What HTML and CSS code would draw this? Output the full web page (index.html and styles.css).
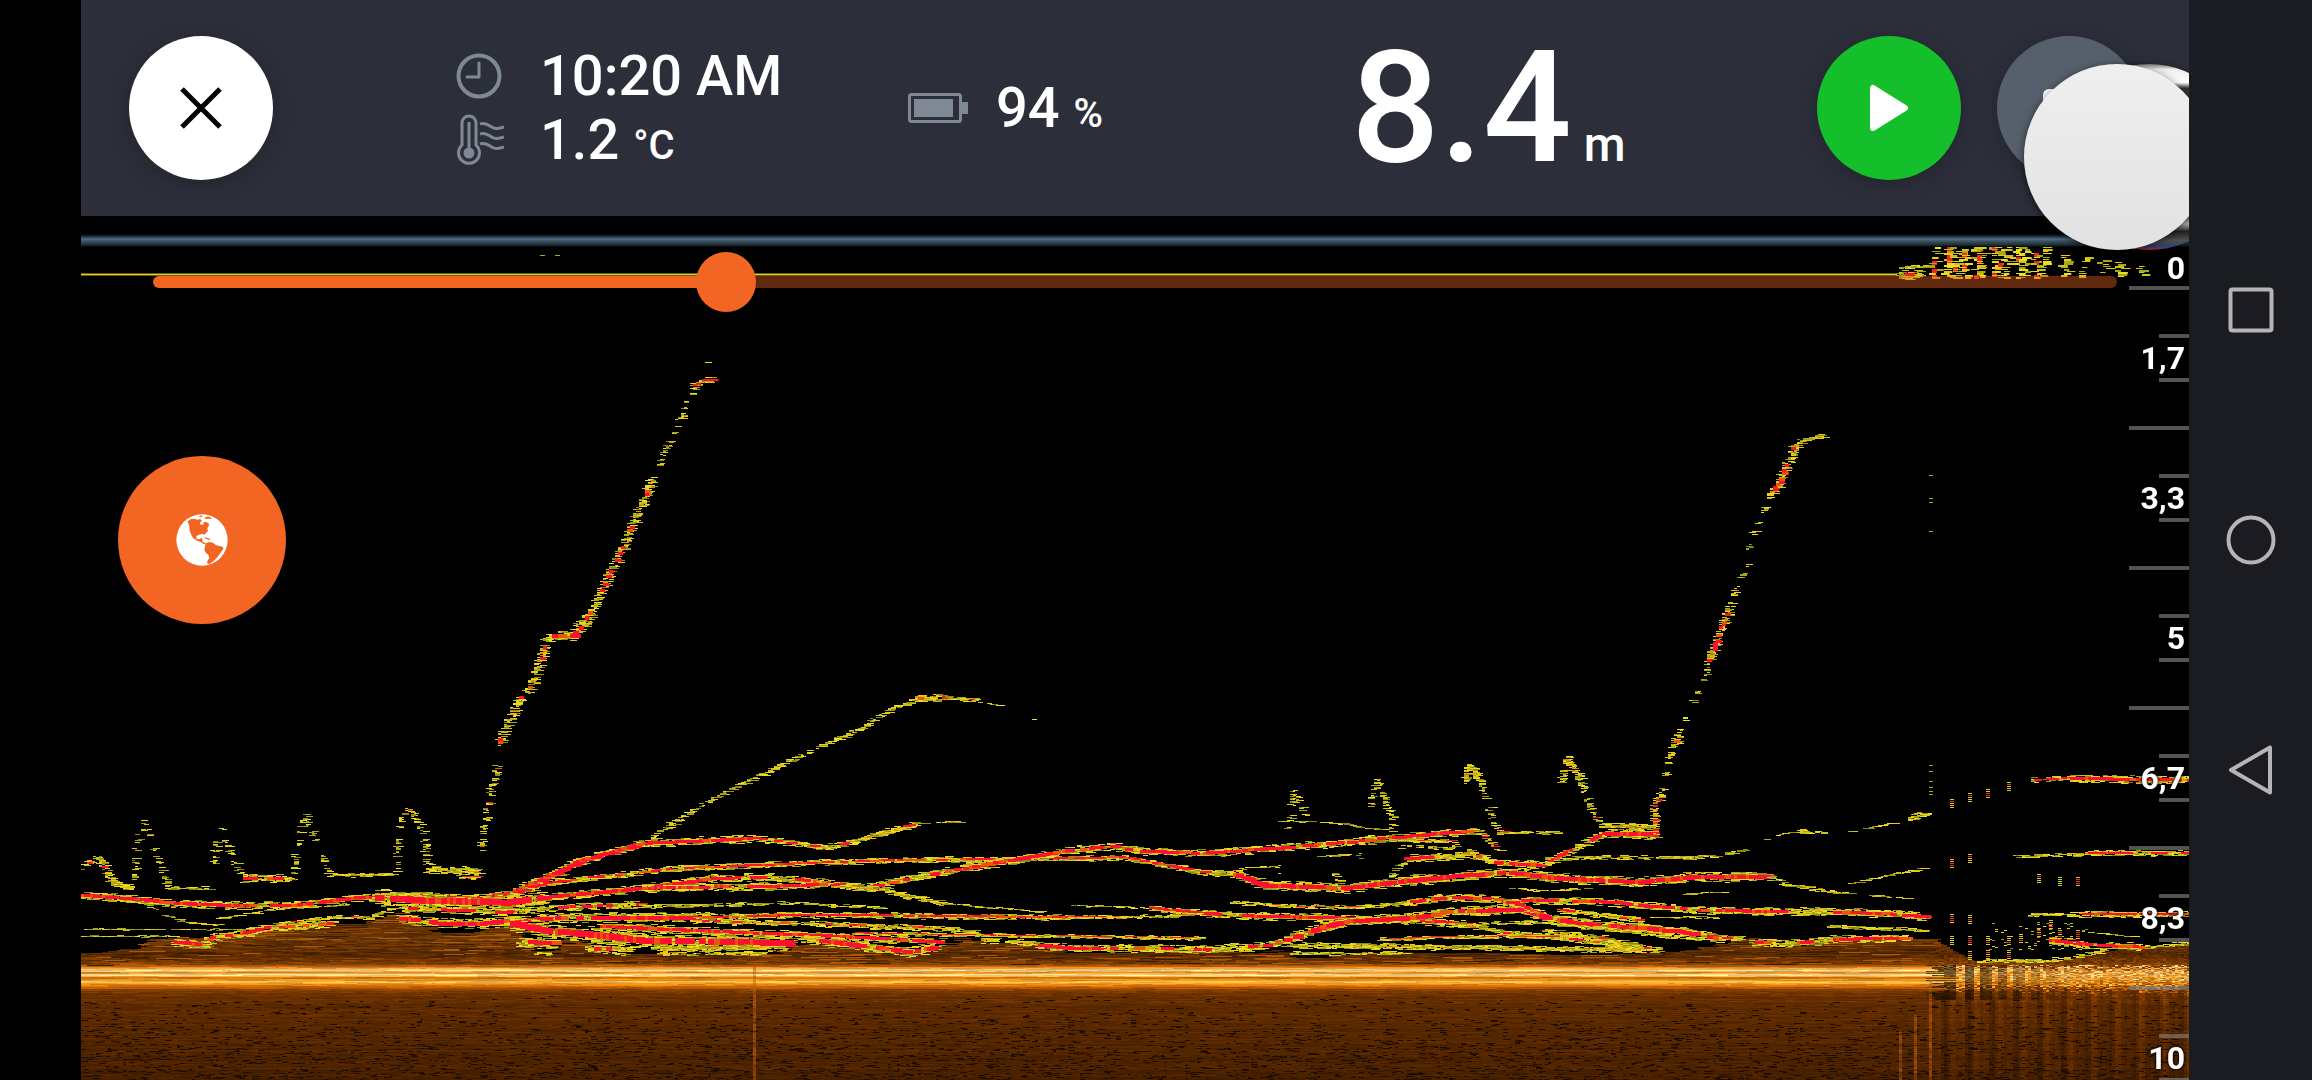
FILE: index.html
```html
<!DOCTYPE html>
<html lang="en">
<head>
    <meta charset="UTF-8">
    <meta name="viewport" content="width=device-width, initial-scale=1.0">
    <title>Sonar History</title>
    <link rel="stylesheet" href="styles.css">
</head>
<body>
    <main class="app">
        <header class="topbar">
            <div>
                <button class="round close" type="button" aria-label="Close">
                    <svg width="44" height="44" viewBox="0 0 44 44"><path d="M3 3L41 41M41 3L3 41" stroke="#000" stroke-width="5"/></svg>
                </button>
            </div>
            <div class="readouts">
                <div class="readout">
                    <svg class="icon" width="48" height="50" viewBox="0 0 48 50" fill="none" stroke="#7f8995" stroke-width="4">
                        <circle cx="23" cy="25" r="20.5"/>
                        <path d="M23 12v14H11" stroke-width="3" stroke-linecap="round" stroke-linejoin="round"/>
                    </svg>
                    <span>10:20 AM</span>
                </div>
                <div class="readout">
                    <svg class="icon" width="48" height="52" viewBox="0 0 48 52" fill="none" stroke="#7f8995" stroke-width="3">
                        <path d="M6 31V9a7 7 0 0 1 14 0v22a10.500 10.500 0 1 1-14 0z"/>
                        <path d="M13 8v30"/>
                        <circle cx="13" cy="39" r="5.500" fill="#7f8995" stroke="none"/>
                        <path d="M24 10c9-4 10 9 24 3M24 20c9-4 10 9 24 3M24 30c9-4 10 9 24 3"/>
                    </svg>
                    <span>1.2 <small>°C</small></span>
                </div>
            </div>
            <div class="readout battery">
                <svg class="icon" width="60" height="30" viewBox="0 0 60 30">
                    <rect x="1.500" y="1.500" width="51" height="27" rx="2" fill="none" stroke="#7f8995" stroke-width="3"/>
                    <rect x="6" y="6" width="39" height="18" fill="#7f8995"/>
                    <rect x="54" y="9" width="6" height="12" fill="#7f8995"/>
                </svg>
                <span>94 <small>%</small></span>
            </div>
            <div class="depth">8.4<small>m</small></div>
            <div class="actions">
                <button class="round play" type="button" aria-label="Play">
                    <svg width="40" height="48" viewBox="0 0 40 48"><path d="M4 4v40L36 24z" fill="#fff" stroke="#fff" stroke-width="6" stroke-linejoin="round"/></svg>
                </button>
                <button class="round more" type="button" aria-label="Take a snapshot">
                    <svg width="52" height="38" viewBox="0 0 52 38"><rect width="52" height="38" rx="6" fill="#fff"/></svg>
                </button>
            </div>
        </header>

        <section class="sonar">
            <canvas id="echo" width="2108" height="864"></canvas>
            <input class="seek" type="range" min="0" max="1000" value="285" aria-label="Playback position">
            <ol class="scale">
                <li class="surface">0</li>
                <li>1,7</li>
                <li>3,3</li>
                <li>5</li>
                <li>6,7</li>
                <li>8,3</li>
                <li>10</li>
            </ol>
        </section>

        <button class="map" type="button" aria-label="Map">
            <svg width="52" height="52" viewBox="288 282 156 156">
                <circle cx="366" cy="360" r="77" fill="#fff"/>
                <g fill="#f26522">
                    <path d="M322 305L331 298L343 296L352 299L361 297L366 303L359 308L362 314L370 314L371 306L379 306L387 311L386 318L382 325L384 333L378 339L373 344L368 342L356 344L349 349L350 357L358 358L363 354L368 356L366 363L373 368L378 370L372 373L363 367L352 362L340 355L334 345L329 332L328 318L325 310Z"/>
                    <path d="M377 370L388 366L399 368L407 375L418 378L428 380L430 386L423 397L412 412L400 424L390 431L382 431L382 423L388 414L385 404L378 399L373 389Z"/>
                    <path d="M374 293L384 289L393 293L394 297L386 296L376 297ZM357 289L365 286L367 290L360 292ZM370 352L379 353L391 357L387 360L377 356Z"/>
                </g>
            </svg>
        </button>
        <div class="bubble photo"></div>
        <div class="bubble"></div>
    </main>

    <nav class="sysnav">
        <button type="button" aria-label="Recent apps">
            <svg width="50" height="50" viewBox="0 0 50 50"><rect x="4.500" y="4.500" width="41" height="41" rx="2"/></svg>
        </button>
        <button type="button" aria-label="Home">
            <svg width="50" height="50" viewBox="0 0 50 50"><circle cx="25" cy="25" r="22.500"/></svg>
        </button>
        <button type="button" aria-label="Back">
            <svg width="50" height="50" viewBox="0 0 50 50"><path d="M5 25L44 2.500V47.500Z" stroke-linejoin="round"/></svg>
        </button>
    </nav>

    <script src="echo.js"></script>
</body>
</html>
```
FILE: styles.css
```css
* {
    box-sizing: border-box;
}
body {
    margin: 0;
    padding-left: 81px;
    min-height: 100vh;
    display: flex;
    background-color: #000;
    color: #fff;
    font-family: Roboto, "Liberation Sans", sans-serif;
}
button {
    border: none;
    padding: 0;
    cursor: pointer;
    display: flex;
    align-items: center;
    justify-content: center;
}
.app {
    flex: 1;
    min-width: 0;
    display: flex;
    flex-direction: column;
    position: relative;
    overflow: hidden;
}

/* top bar */
.topbar {
    display: grid;
    grid-template-columns: 327fr 452fr 443fr 466fr auto;
    align-items: center;
    padding: 36px 48px;
    background-color: #2c2f3a;
}
.round {
    width: 144px;
    height: 144px;
    border-radius: 50%;
    box-shadow: 0 4px 20px rgba(0, 0, 0, 0.25);
}
.close {
    background-color: #fff;
}
.play {
    background-color: #15bf2c;
}
.more {
    background-color: #56606c;
}
.actions {
    display: flex;
    gap: 36px;
}
.readout {
    display: flex;
    align-items: center;
    gap: 36px;
    font-size: 56px;
    font-weight: 500;
    line-height: 64px;
    white-space: nowrap;
}
.readout small {
    font-size: 40px;
    line-height: 1;
}
.battery {
    gap: 28px;
}
.icon {
    flex: none;
}
.depth {
    font-size: 156px;
    font-weight: 500;
    line-height: 144px;
    white-space: nowrap;
}
.depth small {
    font-size: 48px;
    line-height: 1;
    margin-left: 12px;
}

/* echogram */
.sonar {
    flex: 1;
    position: relative;
    overflow: hidden;
}
#echo {
    display: block;
    width: 100%;
    height: 100%;
}
.seek {
    appearance: none;
    position: absolute;
    left: 72px;
    right: 72px;
    top: 36px;
    width: calc(100% - 144px);
    height: 60px;
    margin: 0;
    background: none;
}
.seek::-webkit-slider-runnable-track {
    height: 12px;
    border-radius: 6px;
    background: linear-gradient(to right, #f26522 29%, rgba(242, 101, 34, 0.4) 29%);
}
.seek::-webkit-slider-thumb {
    appearance: none;
    width: 60px;
    height: 60px;
    margin-top: -24px;
    border-radius: 50%;
    background-color: #f26522;
}
.scale {
    --tick: linear-gradient(rgba(128, 128, 128, 0.65), rgba(128, 128, 128, 0.65));
    position: absolute;
    top: 30px;
    right: 0;
    margin: 0;
    padding: 0;
    list-style: none;
    font-size: 32px;
    font-weight: 700;
    line-height: 44px;
    text-align: right;
    text-shadow: 0 0 3px #000, 0 0 3px #000;
}
.scale li {
    width: 60px;
    height: 140px;
    padding: 50px 4px 0 0;
    background: var(--tick) right 0 / 60px 4px no-repeat,
        var(--tick) right 48px / 30px 4px no-repeat,
        var(--tick) right 92px / 30px 4px no-repeat;
}
.scale .surface {
    height: 40px;
    padding-top: 0;
    background: none;
}

/* floating controls */
.map {
    position: absolute;
    left: 37px;
    top: 456px;
    width: 168px;
    height: 168px;
    border-radius: 50%;
    background-color: #f26522;
}
.bubble {
    position: absolute;
    top: 64px;
    right: -21px;
    width: 186px;
    height: 186px;
    border-radius: 50%;
    background: linear-gradient(#efefef, #e2e2e2);
    box-shadow: 0 2px 8px rgba(0, 0, 0, 0.6);
}
.photo {
    right: -53px;
    background: linear-gradient(#77736a 0, #eee 3%, #fff 10%, #333 13%, #555 80%, #bbb 86%, #222 90%, #54514a 95%, #2b3f80 98%, #b02828);
}

/* system navigation */
.sysnav {
    width: 123px;
    display: flex;
    flex-direction: column;
    align-items: center;
    justify-content: center;
    gap: 170px;
    background-color: #1b1c21;
}
.sysnav button {
    width: 60px;
    height: 60px;
    background: none;
}
.sysnav svg {
    fill: none;
    stroke: #b5b5b5;
    stroke-width: 4;
}
```
FILE: echo.js
```js
const canvas = document.getElementById('echo');
const ctx = canvas.getContext('2d');
const LEFT = 81, RIGHT = 2189, TOP = 216, BOTTOM = 1080;

// echoes are in screen coordinates
ctx.translate(-LEFT, -TOP);

// seeded random, so the echogram is the same on every load
let seed = 8402;
function rand() {
    seed = (seed + 0x6D2B79F5) | 0;
    let t = Math.imul(seed ^ (seed >>> 15), 1 | seed);
    t = (t + Math.imul(t ^ (t >>> 7), 61 | t)) ^ t;
    return ((t ^ (t >>> 14)) >>> 0) / 4294967296;
}

const yellows = ['#e8e020', '#c8c41c', '#a8a818', '#f0c818', '#8c8c14'];

function dash(x, y, w, color, h) {
    ctx.fillStyle = color;
    ctx.fillRect(Math.round(x / 3) * 3, Math.round(y), w, h || 1);
}

function heightAt(points, x) {
    for (let i = 1; i < points.length; i++) {
        const [x0, y0] = points[i - 1];
        const [x1, y1] = points[i];
        if (x <= x1) return y0 + (y1 - y0) * (x - x0) / (x1 - x0);
    }
    return points[points.length - 1][1];
}

// seabed colour by depth: y, r, g, b
const layers = [
    [900, 100, 48, 0], [940, 112, 56, 4], [955, 90, 42, 0], [963, 120, 58, 2],
    [966, 190, 98, 10], [968, 240, 160, 50], [970, 255, 225, 160], [972, 225, 135, 25],
    [975, 255, 225, 150], [977, 215, 115, 5], [980, 240, 155, 30], [982, 255, 195, 90],
    [984, 230, 130, 10], [987, 190, 92, 2], [990, 130, 62, 0], [995, 108, 50, 0],
    [1005, 95, 43, 0], [1040, 84, 38, 0], [1080, 72, 32, 0]
];

function layerColor(y) {
    for (let i = 1; i < layers.length; i++) {
        if (y <= layers[i][0]) {
            const a = layers[i - 1], b = layers[i];
            const f = (y - a[0]) / (b[0] - a[0]);
            return [1, 2, 3].map(k => a[k] + (b[k] - a[k]) * f);
        }
    }
    return layers[layers.length - 1].slice(1);
}

const seabed = [
    [81, 953], [105, 950], [134, 947], [141, 939], [171, 937], [209, 938], [241, 933], [280, 925],
    [355, 923], [396, 913], [419, 927], [437, 933], [473, 932], [509, 923], [523, 947], [544, 955],
    [562, 937], [580, 942], [591, 952], [626, 953], [765, 954], [783, 945], [819, 943], [890, 950],
    [911, 953], [954, 938], [983, 942], [1033, 943], [1061, 952], [1104, 953], [1158, 950], [1200, 950],
    [1254, 953], [1271, 948], [1293, 958], [1325, 957], [1343, 952], [1500, 953], [1593, 955],
    [1682, 950], [1718, 943], [1743, 935], [1773, 948], [1813, 940], [1933, 938], [1952, 950],
    [1977, 962], [2050, 962], [2087, 955], [2123, 948], [2189, 945]
];

function drawSeabed() {
    for (let y = 912; y < BOTTOM; y++) {
        const base = layerColor(y);
        const rowShade = 0.92 + rand() * 0.16;
        let x = LEFT;
        while (x < RIGHT) {
            const broken = x > 1925;
            const w = broken ? 3 : 3 + Math.floor(rand() * (y > 965 && y < 990 ? 14 : 7)) * 3;
            if (y >= heightAt(seabed, x)) {
                let shade = rowShade * (0.86 + rand() * 0.28);
                let c = base;
                if (y < 964) shade *= 0.75 + rand() * 0.45;
                if (broken && y > 964 && y < 1000) {
                    c = layerColor(y + (rand() - 0.5) * 12);
                    // pings lost while the sonar was moving
                    const fade = Math.min(1, Math.max(0, (x - 1950) / 130));
                    const column = Math.abs(Math.sin(x * 0.19)) > 0.8 ? 1 : 0.45 + 0.5 * fade;
                    shade *= x < 1946 ? 0.45 : column;
                }
                if (broken && y >= 990) shade *= 1 + 0.25 * Math.sin(x * 0.4) * Math.sin(x * 0.13);
                ctx.fillStyle = 'rgb(' + c.map(v => Math.min(255, Math.round(v * shade))).join(',') + ')';
                ctx.fillRect(x, y, w, 1);
            }
            x += w;
        }
    }
    // dark flecks, denser with depth
    for (let i = 0; i < 3800; i++) {
        const y = 994 + Math.pow(rand(), 0.6) * 86;
        dash(LEFT + rand() * 2100, y, 3 + Math.floor(rand() * 3) * 2, '#1f0e00');
    }
    for (let i = 0; i < 260; i++) {
        const x = LEFT + rand() * 1850;
        const y = heightAt(seabed, x) + rand() * 22;
        if (y < 965) dash(x, y, 9 + rand() * 30, rand() < 0.6 ? '#a85a08' : '#3c1c00');
    }
    // interference lines
    [[754, 966], [1898, 1030], [1913, 1015], [1930, 980]].forEach(([x, y0]) => {
        for (let y = y0; y < BOTTOM; y += 2) dash(x, y, 3, 'rgba(190,95,15,' + (0.3 + rand() * 0.4) + ')', 2);
    });
}

// heat 0..1 is how much of the core is red, cover 0..1 how unbroken the echo is
function trace(thick, heat, cover, points) {
    const red = [];
    for (let i = 1; i < points.length; i++) {
        const [x0, y0] = points[i - 1];
        const [x1, y1] = points[i];
        const flat = Math.abs(x1 - x0) > 2 * Math.abs(y1 - y0);
        const spread = flat ? thick : thick + 3;
        const steps = Math.max(1, Math.round(Math.hypot(x1 - x0, y1 - y0) / 3));
        for (let s = 0; s < steps; s++) {
            const x = x0 + (x1 - x0) * s / steps;
            const y = y0 + (y1 - y0) * s / steps;
            if (rand() > cover) continue;
            const count = thick === 1 ? 1 : Math.round(thick * 1.5);
            for (let n = 0; n < count; n++) {
                const off = (rand() + rand() - 1) * thick * 1.1;
                const w = (flat ? 5 : 3) + Math.floor(rand() * 3) * 2;
                dash(x + (rand() - 0.5) * spread, y + off, w, yellows[Math.floor(rand() * yellows.length)]);
            }
            const wave = 0.5 + 0.5 * Math.sin(x * 0.045 + y * 0.1 + points[0][1]);
            if (rand() < heat * (0.6 + wave)) red.push([x, y, flat]);
            else if (thick > 2 && rand() < 0.35) dash(x, y, 5, '#f09018');
        }
    }
    red.forEach(([x, y, flat]) => {
        const color = rand() < 0.2 ? '#f05010' : '#ff1030';
        dash(x, y - thick * 0.3, flat ? 6 + rand() * 6 : 4 + rand() * 3, color, Math.max(1, Math.round(thick * 0.7)));
    });
}

function drawEchoes() {
    // jig marks on the left
    trace(3, 0.1, 0.9, [[82, 866], [95, 857], [101, 862], [110, 883], [130, 888]]);
    trace(2, 0, 0.6, [[132, 877], [135, 840], [142, 822], [148, 837], [155, 857], [167, 887], [209, 888]]);
    trace(2, 0, 0.7, [[212, 863], [215, 840], [220, 829], [228, 850], [241, 878]]);
    trace(4, 0.3, 0.9, [[241, 878], [289, 878]]);
    trace(2, 0, 0.7, [[291, 878], [295, 840], [303, 815], [312, 837], [328, 875]]);
    trace(2, 0, 1, [[328, 875], [391, 874]]);
    trace(2, 0.05, 0.7, [[394, 875], [396, 843], [399, 820], [406, 806], [417, 823], [423, 843], [426, 868]]);
    trace(4, 0.1, 0.9, [[426, 870], [477, 871]]);
    trace(2, 1, 1, [[460, 877], [477, 877]]);

    // rising lure, first drop
    trace(2, 0.15, 0.7, [[479, 849], [483, 820], [487, 797], [496, 763]]);
    trace(4, 0.2, 0.85, [[498, 742], [502, 733], [517, 700], [525, 690], [533, 678], [540, 655], [545, 642]]);
    trace(5, 0.3, 0.95, [[545, 640], [553, 635], [572, 635], [582, 622], [592, 608]]);
    trace(4, 0.2, 0.85, [[592, 608], [600, 590], [610, 568], [618, 553], [628, 530], [642, 500], [650, 480]]);
    trace(2, 0, 0.5, [[650, 480], [667, 443], [680, 417], [692, 385]]);
    trace(3, 0.3, 0.9, [[692, 385], [700, 381], [710, 379]]);
    trace(1, 0, 0.4, [[700, 369], [711, 357]]);

    // rising lure, second drop
    trace(3, 0.4, 0.8, [[1652, 836], [1652, 817], [1655, 800], [1662, 787]]);
    trace(2, 0, 0.5, [[1662, 787], [1667, 760], [1671, 747]]);
    trace(4, 0.4, 0.8, [[1671, 747], [1678, 733]]);
    trace(2, 0, 0.4, [[1680, 730], [1688, 703], [1703, 682], [1706, 665]]);
    trace(4, 0.45, 0.9, [[1708, 660], [1719, 630], [1729, 603]]);
    trace(2, 0, 0.4, [[1729, 603], [1743, 568], [1753, 528], [1767, 500]]);
    trace(4, 0.4, 0.9, [[1767, 497], [1778, 482], [1785, 465], [1792, 448], [1802, 441]]);
    trace(2, 0, 0.8, [[1802, 440], [1817, 436], [1825, 433]]);

    // fish leaving the bottom
    trace(2, 0, 0.85, [[651, 837], [672, 822], [704, 803], [733, 787], [783, 763], [819, 745], [861, 727], [890, 708], [919, 698]]);
    trace(4, 0.4, 1, [[915, 698], [944, 697]]);
    trace(2, 0.1, 0.9, [[944, 697], [976, 700]]);
    trace(1, 0, 0.6, [[976, 701], [1004, 706]]);
    trace(1, 0, 1, [[1033, 720], [1037, 720]]);

    // school
    trace(4, 0.6, 1, [[82, 895], [134, 899], [169, 903], [223, 905], [294, 905], [348, 898], [401, 895], [473, 898], [509, 893], [544, 877], [580, 860], [640, 843], [694, 841], [751, 838]]);
    trace(3, 0.15, 1, [[751, 838], [783, 842], [819, 847], [840, 844], [872, 835], [915, 823]]);
    trace(1, 0, 0.8, [[915, 823], [961, 821]]);
    trace(8, 0.9, 1, [[373, 897], [419, 900], [501, 902], [544, 897]]);
    trace(4, 0.6, 1, [[544, 897], [598, 892], [640, 888]]);
    trace(3, 0.4, 1, [[509, 893], [544, 883], [591, 877], [640, 872], [676, 868], [729, 866], [819, 862], [890, 860], [990, 859], [1061, 858], [1122, 857], [1158, 864], [1200, 872], [1232, 874]]);
    trace(5, 0.65, 1, [[1232, 874], [1264, 885], [1343, 888], [1379, 883], [1450, 876], [1504, 872], [1557, 878], [1639, 882], [1682, 877], [1769, 876]]);
    trace(2, 0, 0.9, [[1769, 876], [1787, 885], [1835, 892]]);
    trace(1, 0, 0.6, [[1835, 892], [1908, 898]]);
    trace(4, 0.4, 1, [[640, 888], [711, 878], [765, 877], [801, 880], [840, 885], [861, 888], [897, 880], [944, 871], [1015, 859], [1061, 851], [1108, 846], [1140, 851], [1200, 853]]);
    trace(4, 0.5, 1, [[1200, 853], [1271, 848], [1343, 842], [1396, 837], [1450, 832], [1477, 831]]);
    trace(2, 0.2, 0.8, [[1477, 831], [1489, 843], [1500, 852]]);
    trace(4, 0.5, 1, [[640, 888], [676, 887], [765, 886], [826, 884]]);
    trace(3, 0, 0.9, [[840, 885], [883, 890], [911, 897], [944, 903]]);
    trace(1, 0, 0.8, [[944, 903], [997, 908], [1044, 912]]);
    trace(1, 0, 0.9, [[134, 899], [146, 905], [162, 915], [184, 922], [223, 925]]);
    trace(1, 0, 0.8, [[216, 918], [248, 913], [280, 908], [348, 904]]);
    trace(1, 0, 0.7, [[82, 929], [260, 929]]);
    trace(1, 0, 0.9, [[82, 936], [175, 936]]);
    trace(4, 0.3, 1, [[173, 942], [205, 945], [209, 937], [241, 933], [266, 927], [301, 925], [330, 923]]);
    trace(2, 0.1, 0.9, [[280, 923], [330, 917], [366, 917], [394, 908]]);
    trace(4, 0.1, 0.9, [[400, 908], [500, 912], [560, 907], [640, 904]]);
    trace(2, 0, 0.6, [[640, 906], [690, 905], [790, 903], [850, 906], [880, 907]]);
    trace(5, 0.7, 1, [[398, 918], [437, 923], [480, 923], [509, 920], [576, 917], [640, 917], [711, 917]]);
    trace(3, 0.6, 1, [[711, 917], [783, 915], [869, 915], [944, 916], [1069, 917]]);
    trace(2, 0.2, 0.9, [[1069, 917], [1154, 916], [1200, 913]]);
    trace(4, 0.75, 1, [[1200, 913], [1254, 916], [1307, 917], [1379, 919], [1432, 921], [1468, 925]]);
    trace(3, 0.3, 1, [[1468, 925], [1504, 933], [1557, 937], [1629, 947]]);
    trace(8, 0.8, 1, [[509, 923], [544, 930], [598, 935], [640, 940], [711, 941], [790, 943]]);
    trace(6, 0.6, 1, [[519, 942], [555, 943]]);
    trace(5, 0.1, 1, [[587, 948], [630, 950]]);
    trace(3, 0, 1, [[651, 948], [765, 947]]);
    trace(2, 0, 0.8, [[535, 953], [552, 953]]);
    trace(2, 0, 0.8, [[658, 953], [765, 953]]);
    trace(4, 0.8, 1, [[600, 926], [640, 928], [711, 931], [783, 934], [854, 937], [940, 942]]);
    trace(5, 0.5, 1, [[801, 938], [854, 945], [908, 952], [933, 947]]);
    trace(3, 0.1, 0.9, [[690, 920], [747, 922], [819, 924], [940, 928], [979, 935]]);
    trace(2, 0.4, 1, [[854, 933], [979, 935], [1069, 936], [1140, 937], [1200, 938]]);
    trace(3, 0, 0.8, [[979, 940], [1033, 943]]);
    trace(4, 0.7, 1, [[1036, 945], [1069, 948], [1104, 948]]);
    trace(4, 0.15, 1, [[1104, 948], [1200, 949], [1257, 946], [1282, 941]]);
    trace(5, 0.6, 1, [[1282, 941], [1318, 927], [1343, 921], [1414, 917], [1450, 911], [1521, 909], [1543, 917], [1575, 923], [1629, 927], [1682, 932], [1718, 938]]);
    trace(3, 0.1, 1, [[1718, 938], [1739, 938]]);
    trace(1, 0, 0.7, [[1070, 905], [1150, 908]]);
    trace(3, 0.3, 1, [[1150, 908], [1200, 913]]);
    trace(2, 0.2, 1, [[1229, 902], [1289, 906], [1350, 907], [1396, 903]]);
    trace(4, 0.4, 1, [[1396, 903], [1446, 897], [1493, 899], [1521, 905], [1532, 912]]);
    trace(4, 0.5, 1, [[1521, 900], [1593, 901], [1646, 906], [1700, 910], [1760, 911], [1813, 911], [1868, 913], [1904, 915], [1926, 917]]);
    trace(2, 0.5, 1, [[1379, 939], [1432, 937], [1504, 936], [1557, 937]]);
    trace(3, 0, 1, [[1289, 945], [1450, 947], [1657, 950]]);
    trace(2, 0, 0.8, [[1290, 953], [1405, 953]]);
    trace(2, 0, 0.7, [[1440, 924], [1540, 922], [1640, 933], [1700, 940]]);
    trace(3, 0.1, 0.9, [[1543, 931], [1600, 938], [1657, 950]]);
    trace(4, 0.4, 1, [[1404, 858], [1450, 857], [1466, 853], [1496, 863], [1539, 865], [1575, 847], [1604, 832]]);
    trace(5, 0.8, 1, [[1604, 833], [1652, 834]]);
    trace(3, 0.1, 1, [[1600, 825], [1652, 827]]);
    trace(2, 0, 0.8, [[1389, 875], [1404, 860]]);
    trace(2, 0, 0.8, [[1543, 863], [1575, 857], [1682, 857], [1714, 856], [1746, 848]]);
    trace(3, 0.2, 1, [[1557, 910], [1639, 920]]);
    trace(2, 0.1, 0.9, [[1393, 840], [1450, 841], [1455, 848]]);
    trace(2, 0, 0.5, [[1400, 846], [1455, 848]]);
    trace(1, 0, 0.8, [[1279, 820], [1336, 823], [1365, 828], [1393, 830]]);
    trace(1, 0, 0.8, [[1318, 856], [1360, 854], [1363, 864]]);
    trace(1, 0, 0.8, [[1240, 868], [1278, 866], [1280, 876]]);
    trace(2, 0, 0.7, [[1331, 872], [1340, 884]]);
    trace(1, 0, 0.7, [[1508, 888], [1540, 891], [1590, 887]]);
    trace(1, 0, 0.9, [[1684, 894], [1726, 891]]);
    trace(1, 0, 0.9, [[1650, 917], [1715, 917]]);

    // jig marks on the right
    trace(2, 0, 0.5, [[1286, 828], [1292, 792], [1306, 817]]);
    trace(2, 0, 0.6, [[1369, 807], [1375, 780], [1386, 807], [1393, 830]]);
    trace(3, 0.2, 0.7, [[1461, 790], [1467, 763], [1479, 783]]);
    trace(2, 0, 0.7, [[1479, 783], [1486, 803], [1496, 833]]);
    trace(2, 0.15, 0.9, [[1496, 832], [1557, 832]]);
    trace(3, 0.1, 0.9, [[1560, 782], [1566, 757], [1579, 782]]);
    trace(2, 0.1, 0.8, [[1579, 782], [1596, 823]]);

    // towards the live edge
    trace(1, 0, 0.7, [[1762, 840], [1791, 831]]);
    trace(2, 0, 0.7, [[1791, 831], [1824, 832]]);
    trace(1, 0, 0.9, [[1849, 831], [1897, 822]]);
    trace(3, 0, 1, [[1908, 817], [1926, 813]]);
    trace(1, 0, 0.9, [[1849, 883], [1926, 867]]);
    trace(2, 0, 0.9, [[1828, 926], [1926, 930]]);
    trace(4, 0.2, 1, [[1751, 942], [1791, 943], [1831, 939]]);
    trace(4, 0.7, 1, [[1831, 939], [1904, 938]]);
    trace(3, 0.2, 0.6, [[2030, 780], [2068, 778]]);
    trace(4, 0.6, 1, [[2068, 778], [2189, 780]]);
    trace(2, 0, 0.6, [[2015, 856], [2086, 853]]);
    trace(3, 0.5, 1, [[2086, 853], [2189, 853]]);
    trace(2, 0.1, 0.6, [[2026, 914], [2080, 914]]);
    trace(3, 0.5, 1, [[2080, 914], [2189, 914]]);
    trace(4, 0.5, 0.9, [[2050, 940], [2087, 945], [2141, 947]]);
    trace(2, 0, 0.8, [[2141, 947], [2189, 943]]);
    trace(2, 0, 0.8, [[1977, 961], [2050, 960], [2105, 950]]);
    trace(1, 0, 0.6, [[2086, 932], [2140, 937]]);

    // single pings
    const columns = [
        [1950, 803], [1969, 797], [1987, 793], [2006, 786], [1950, 863], [1969, 858], [1950, 918],
        [1969, 919], [1950, 940], [1969, 940], [1987, 940], [1969, 955], [1987, 954], [2006, 954],
        [2006, 940], [2018, 938], [2036, 932], [2048, 924], [2058, 934], [2077, 934], [2036, 878],
        [2058, 881], [2077, 881]
    ];
    columns.forEach(([x, y]) => {
        for (let dy = -4; dy <= 4; dy += 2) dash(x, y + dy, 4, Math.abs(dy) < 3 && rand() < 0.5 ? '#f03018' : '#d8d020');
    });
    for (let i = 0; i < 60; i++) dash(1987 + rand() * 100, 922 + rand() * 28, 3, yellows[i % 5]);
    [475, 498, 502, 531, 765, 771, 781, 787, 791, 794].forEach(y => dash(1928, y, 4, '#a8a818'));
    [[541, 255], [556, 255]].forEach(([x, y]) => dash(x, y, 5, '#a8a818'));
}

function drawSurface() {
    const water = ctx.createLinearGradient(0, 234, 0, 247);
    water.addColorStop(0, '#000');
    water.addColorStop(0.2, '#203540');
    water.addColorStop(0.4, '#536d7e');
    water.addColorStop(0.6, '#344b5a');
    water.addColorStop(0.85, '#1c2c34');
    water.addColorStop(1, '#000');
    ctx.fillStyle = water;
    ctx.fillRect(LEFT, 234, RIGHT - LEFT, 13);

    ctx.fillStyle = '#6a5c10';
    ctx.fillRect(LEFT, 273, 1816, 3);
    ctx.fillStyle = '#e0d028';
    ctx.fillRect(LEFT, 274, 1816, 1);

    trace(4, 0.1, 1, [[1897, 275], [1920, 274]]);
    trace(2, 0, 0.5, [[1900, 268], [1930, 265]]);
    // splash noise
    [1932, 1946, 1954, 1962, 1974, 1978, 1992, 1997, 2003, 2015, 2022, 2033, 2041, 2063, 2082, 2101, 2117, 2140].forEach(x => {
        const top = x > 2045 ? 252 + (x - 2045) / 7 : 247;
        for (let y = top; y < 278; y += 2) {
            if (rand() < 0.8) dash(x + (rand() - 0.5) * 8, y, 5 + rand() * 5, yellows[Math.floor(rand() * 4)], 1 + Math.round(rand()));
            if (x < 2040 && rand() < 0.12) dash(x, y, 5, '#ff2020', 4);
        }
    });
}

ctx.fillStyle = '#000';
ctx.fillRect(LEFT, TOP, RIGHT - LEFT, BOTTOM - TOP);
drawSeabed();
drawEchoes();
drawSurface();
```
